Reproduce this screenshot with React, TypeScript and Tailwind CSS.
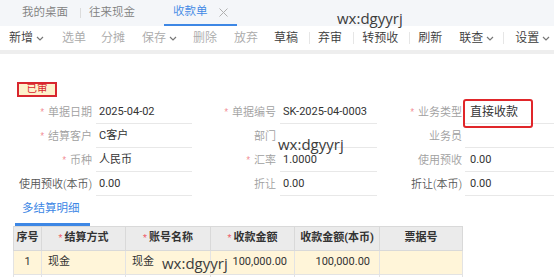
import React from "react";

const Chevron = () => (
  <svg width="8" height="5" viewBox="0 0 8 5" className="ml-[3px]">
    <path d="M1 1l3 3 3-3" fill="none" stroke="#777" strokeWidth="1.2" />
  </svg>
);

type Tool = { t: string; ml: number; on: boolean; chev?: boolean; sep?: boolean };

const tools: Tool[] = [
  { t: "新增", ml: 0, on: true, chev: true },
  { t: "选单", ml: 18, on: false },
  { t: "分摊", ml: 15, on: false },
  { t: "保存", ml: 17, on: false, chev: true },
  { t: "删除", ml: 16, on: false },
  { t: "放弃", ml: 17, on: false },
  { t: "草稿", ml: 16, on: true },
  { t: "", ml: 11, on: true, sep: true },
  { t: "弃审", ml: 8, on: true },
  { t: "", ml: 11, on: true, sep: true },
  { t: "转预收", ml: 8, on: true },
  { t: "", ml: 11, on: true, sep: true },
  { t: "刷新", ml: 8, on: true },
  { t: "联查", ml: 17, on: true, chev: true },
  { t: "", ml: 9, on: true, sep: true },
  { t: "设置", ml: 11, on: true, chev: true },
];

type Field = { req?: boolean; label: string; value: string; dark?: boolean };

const rows: Field[][] = [
  [
    { req: true, label: "单据日期", value: "2025-04-02" },
    { req: true, label: "单据编号", value: "SK-2025-04-0003" },
    { req: true, label: "业务类型", value: "直接收款" },
  ],
  [
    { req: true, label: "结算客户", value: "C客户" },
    { label: "部门", value: "" },
    { label: "业务员", value: "" },
  ],
  [
    { req: true, label: "币种", value: "人民币" },
    { req: true, label: "汇率", value: "1.0000" },
    { label: "使用预收", value: "0.00" },
  ],
  [
    { label: "使用预收(本币)", value: "0.00", dark: true },
    { label: "折让", value: "0.00" },
    { label: "折让(本币)", value: "0.00", dark: true },
  ],
];

const labelW = ["w-[92px]", "w-[84px]", "w-[85px]"];
const valueW = ["ml-[4px] w-[96px]", "ml-[4px] w-[97px]", "ml-[3px] flex-1"];
const valuePad = ["pl-[3px]", "pl-[3px]", "pl-[5px]"];

const Watermark = ({ className }: { className: string }) => (
  <div
    className={`absolute font-['Open_Sans',sans-serif] text-[15px] leading-none text-[#3c3c3c] ${className}`}
  >
    wx:dgyyrj
  </div>
);

export default function App() {
  return (
    <div className="relative w-[554px] h-[277px] overflow-hidden bg-white font-['Roboto','Noto_Sans_CJK_SC',sans-serif] text-[#333]">
      {/* Tab bar */}
      <div className="h-[26px] bg-[#f4f6f9] flex items-end text-[11.5px] text-[#808080] font-[350]">
        <div className="flex items-center h-[26px] pl-[22px]">
          <span>我的桌面</span>
          <span className="ml-[12px] w-px h-[10px] bg-[#dcdcdc]" />
          <span className="ml-[8px]">往来现金</span>
        </div>
        <div className="ml-[29px] w-[73px] h-[26px] flex flex-col">
          <div className="flex-1 flex items-center pl-[9px]">
            <span className="text-[#3d87e5]">收款单</span>
            <svg width="9" height="9" viewBox="0 0 9 9" className="ml-[11px]">
              <path d="M0.5 0.5l8 8M8.5 0.5l-8 8" stroke="#b0b0b0" strokeWidth="1" />
            </svg>
          </div>
          <div className="h-[2px] bg-[#3d87e5]" />
        </div>
      </div>

      {/* Toolbar */}
      <div className="h-[24px] flex items-center pl-[9px] text-[12px] font-[350]">
        {tools.map((it, i) =>
          it.sep ? (
            <span key={i} style={{ marginLeft: it.ml }} className="w-px h-[12px] bg-[#e6e6e6]" />
          ) : (
            <span
              key={i}
              style={{ marginLeft: it.ml }}
              className={`flex items-center whitespace-nowrap ${it.on ? "text-[#3a3a3a]" : "text-[#aaa]"}`}
            >
              {it.t}
              {it.chev && <Chevron />}
            </span>
          )
        )}
      </div>
      <div className="h-[4px] bg-[#eeeeee]" />

      {/* Body */}
      <div className="pt-[28px]">
        <div className="ml-[17px] w-[40px] h-[15px] border-2 border-[#d8262e] bg-[#fdf1cb] flex items-center justify-center text-[10.5px] leading-none text-[#d8262e]">
          已审
        </div>

        <div className="mt-[4px] grid grid-cols-[192px_185px_177px] text-[11px]">
          {rows.map((r, ri) =>
            r.map((f, ci) => (
              <div key={`${ri}-${ci}`} className="flex h-[24px] items-stretch">
                <div
                  className={`${labelW[ci]} flex items-center justify-end whitespace-nowrap font-[350] ${
                    f.dark ? "text-[#555]" : "text-[#a0a0a0]"
                  }`}
                >
                  {f.req && <span className="text-[#ee5c6a] mr-[4px] text-[9px]">*</span>}
                  {f.label}
                </div>
                <div
                  className={`${valueW[ci]} ${valuePad[ci]} flex items-center border-b border-[#e8e8e8] mb-[1px] whitespace-nowrap ${
                    ri === 0 && ci === 2 ? "text-[12px]" : ""
                  }`}
                >
                  {f.value}
                </div>
              </div>
            ))
          )}
        </div>

        {/* Detail tab */}
        <div className="h-[29px] flex items-end">
          <div className="ml-[15px] flex flex-col">
            <div className="pl-[7px] pr-[10px] pb-[6px] text-[11.5px] text-[#3d87e5]">多结算明细</div>
            <div className="h-[3px] bg-[#3d87e5]" />
          </div>
        </div>

        {/* Table */}
        <table className="ml-[13px] w-[449px] table-fixed border-collapse text-[11px]">
          <colgroup>
            <col className="w-[28px]" />
            <col className="w-[84px]" />
            <col className="w-[85px]" />
            <col className="w-[84px]" />
            <col className="w-[85px]" />
            <col className="w-[83px]" />
          </colgroup>
          <thead>
            <tr className="h-[24px] bg-[#ebebeb] font-bold text-[#333]">
              <th className="border border-[#d9d9d9] font-bold">序号</th>
              <th className="border border-[#d9d9d9] font-bold">
                <span className="text-[#ee5c6a] font-normal text-[9px] mr-[2px]">*</span>结算方式
              </th>
              <th className="border border-[#d9d9d9] font-bold">
                <span className="text-[#ee5c6a] font-normal text-[9px] mr-[2px]">*</span>账号名称
              </th>
              <th className="border border-[#d9d9d9] font-bold">
                <span className="text-[#ee5c6a] font-normal text-[9px] mr-[2px]">*</span>收款金额
              </th>
              <th className="border border-[#d9d9d9] font-bold">收款金额(本币)</th>
              <th className="border border-[#d9d9d9] font-bold">票据号</th>
            </tr>
          </thead>
          <tbody>
            <tr className="h-[24px] bg-[#fff5d9] text-[#333]">
              <td className="border border-[#e3e3e3] text-center">1</td>
              <td className="border border-[#e3e3e3] pl-[6px]">现金</td>
              <td className="border border-[#e3e3e3] pl-[6px]">现金</td>
              <td className="border border-[#e3e3e3] text-right pr-[7px]">100,000.00</td>
              <td className="border border-[#e3e3e3] text-right pr-[9px]">100,000.00</td>
              <td className="border border-[#e3e3e3]"></td>
            </tr>
            <tr className="h-[24px]">
              <td className="border border-[#e3e3e3]"></td>
              <td className="border border-[#e3e3e3]"></td>
              <td className="border border-[#e3e3e3]"></td>
              <td className="border border-[#e3e3e3]"></td>
              <td className="border border-[#e3e3e3]"></td>
              <td className="border border-[#e3e3e3]"></td>
            </tr>
          </tbody>
        </table>
      </div>

      {/* Overlays */}
      <div className="absolute left-[463px] top-[99px] w-[70px] h-[29px] border-2 border-[#e0262a] rounded-[3px]" />
      <Watermark className="left-[337px] top-[11px]" />
      <Watermark className="left-[278px] top-[137px]" />
      <Watermark className="left-[162px] top-[256px]" />
    </div>
  );
}
